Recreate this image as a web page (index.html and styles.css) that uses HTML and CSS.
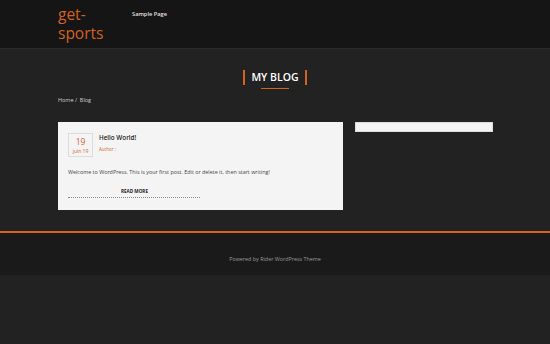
FILE: index.html
```html
<!DOCTYPE html>
<html>
<head>
<meta charset="utf-8">
<link rel="stylesheet" href="styles.css">
</head>
<body>
<header class="site-header">
  <div class="container header-inner">
    <div class="logo">get-<br>sports</div>
    <nav class="nav"><a href="#">Sample Page</a></nav>
  </div>
</header>
<main class="main">
  <div class="page-title">
    <h1><span class="bar"></span>MY BLOG<span class="bar"></span></h1>
    <div class="underline"></div>
  </div>
  <div class="container">
    <div class="breadcrumb">Home /&nbsp; Blog</div>
    <div class="content">
      <article class="card">
        <div class="post-head">
          <div class="date"><div class="day">19</div><div class="month">juin 19</div></div>
          <div class="meta">
            <h2>Hello World!</h2>
            <div class="author">Author :</div>
          </div>
        </div>
        <p class="excerpt">Welcome to WordPress. This is your first post. Edit or delete it, then start writing!</p>
        <div class="more-wrap"><a class="more" href="#">READ MORE</a></div>
        <div class="dots"></div>
      </article>
      <aside class="sidebar"><div class="widget"></div></aside>
    </div>
  </div>
</main>
<footer class="footer">
  <div class="footer-text">Powered by Rider WordPress Theme</div>
</footer>
</body>
</html>
```

FILE: styles.css
```css
html, body {
  margin: 0;
  padding: 0;
  background: #222222;
  font-family: "Open Sans", "Noto Sans", sans-serif;
}
.container {
  width: 435px;
  margin: 0 auto;
  padding-left: 1px;
}
.site-header {
  background: #151515;
  height: 48px;
  border-bottom: 1px solid #2c2c2c;
}
.header-inner {
  display: flex;
  align-items: flex-start;
}
.logo {
  color: #d2621f;
  font-size: 15.5px;
  line-height: 19px;
  padding-top: 5px;
  width: 74px;
}
.nav {
  padding-top: 10px;
  line-height: 9px;
  height: 9px;
}
.nav a {
  display: block;
  color: #e0e0e0;
  font-size: 5.7px;
  font-weight: 600;
  line-height: 9px;
  text-decoration: none;
}
.main {
  padding-top: 20px;
  padding-bottom: 21px;
}
.page-title {
  display: flex;
  flex-direction: column;
  align-items: center;
}
.page-title h1 {
  margin: 0;
  color: #ffffff;
  font-size: 10.5px;
  font-weight: 600;
  line-height: 16px;
  display: flex;
  align-items: center;
  gap: 6px;
}
.bar {
  display: block;
  width: 2px;
  height: 15px;
  background: #d2621f;
}
.underline {
  width: 28px;
  height: 1px;
  background: #d2621f;
  margin-top: 3px;
}
.breadcrumb {
  color: #cccccc;
  font-size: 5.5px;
  margin-top: 7px;
  height: 9px;
  line-height: 9px;
}
.content {
  display: flex;
  gap: 12px;
  margin-top: 17px;
  align-items: flex-start;
}
.card {
  width: 265px;
  height: 66px;
  background: #f4f4f4;
  padding: 11px 10px 11px 10px;
  display: flex;
  flex-direction: column;
}
.post-head {
  display: flex;
  gap: 6px;
  height: 24px;
}
.date {
  width: 23px;
  height: 22px;
  border: 1px solid #dcdcdc;
  text-align: center;
}
.day {
  color: #d2621f;
  font-size: 8.5px;
  line-height: 10px;
  margin-top: 3px;
}
.month {
  color: #d2621f;
  font-size: 5px;
  line-height: 8px;
}
.meta h2 {
  margin: 0;
  font-size: 6.3px;
  font-weight: 600;
  color: #222222;
  line-height: 9px;
}
.author {
  color: #d2621f;
  font-size: 4.5px;
  line-height: 7px;
  margin-top: 4px;
}
.excerpt {
  margin: 11px 0 0 0;
  font-size: 5.4px;
  color: #444444;
  line-height: 9px;
  height: 9px;
}
.more-wrap {
  margin-top: 6px;
  padding-left: 53px;
  line-height: 8px;
  height: 8px;
}
.more {
  font-size: 4.6px;
  font-weight: 700;
  color: #222222;
  text-decoration: none;
}
.dots {
  width: 132px;
  border-top: 1px dotted #888888;
  margin-top: 6px;
}
.sidebar {
  width: 138px;
}
.widget {
  height: 8px;
  background: #f4f4f4;
  border: 1px solid #dddddd;
}
.footer {
  border-top: 2px solid #d2621f;
  background: #1a1a1a;
  height: 42px;
  display: flex;
  align-items: center;
  justify-content: center;
}
.footer-text {
  color: #999999;
  font-size: 5.4px;
  padding-top: 10px;
}
```
